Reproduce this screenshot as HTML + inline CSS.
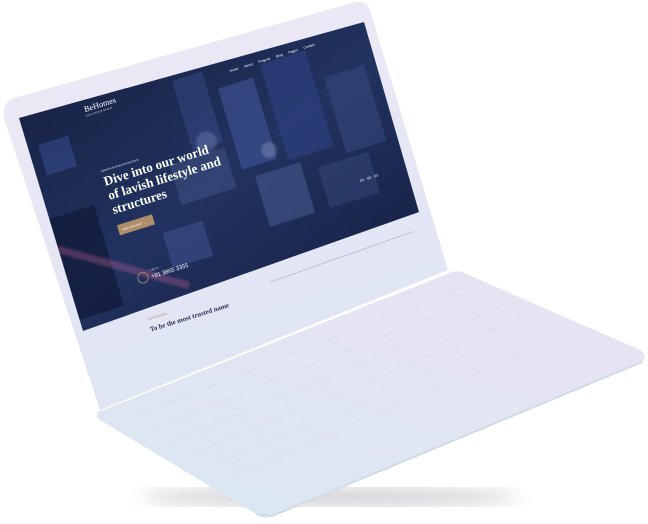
<!DOCTYPE html>
<html><head><meta charset="utf-8"><style>
html,body{margin:0;padding:0;background:#fff;width:648px;height:524px;overflow:hidden}
svg{display:block}
</style></head><body>
<svg width="648" height="524" viewBox="0 0 648 524" xmlns="http://www.w3.org/2000/svg">
<defs>
<linearGradient id="lid" x1="0" y1="0" x2="0.3" y2="1"><stop offset="0" stop-color="#efe9f6"/><stop offset="1" stop-color="#dfe5f3"/></linearGradient>
<linearGradient id="base" x1="0" y1="1" x2="0.6" y2="0"><stop offset="0" stop-color="#d8e8f1"/><stop offset="1" stop-color="#e8e3f2"/></linearGradient>
<linearGradient id="scr" x1="0" y1="0" x2="1" y2="1"><stop offset="0" stop-color="#141d3a"/><stop offset="0.5" stop-color="#223260"/><stop offset="1" stop-color="#141c3c"/></linearGradient>
<filter id="blur"><feGaussianBlur stdDeviation="8"/></filter>
<filter id="b2"><feGaussianBlur stdDeviation="2"/></filter>
<clipPath id="sc"><polygon points="19,118 364,22 419,212 83,331"/></clipPath>
<clipPath id="bc"><path d="M98,412 L452,272 L640,350 L272,516 Z"/></clipPath>
</defs>
<ellipse cx="330" cy="497" rx="190" ry="8" fill="#9a9aa6" opacity="0.5" filter="url(#blur)"/>
<!-- lid -->
<path d="M14,98 L352,3 Q366,-1 370,10 L448,270 L100,410 L4,118 Q2,102 14,98 Z" fill="url(#lid)"/>
<!-- base -->
<path d="M98,412 L452,272 Q458,270 464,273 L640,350 Q648,356 642,362 L272,516 Q262,520 256,514 L100,420 Q95,416 98,412 Z" fill="url(#base)"/>
<path d="M256,514 L272,516 L642,362" fill="none" stroke="#cfdbe8" stroke-width="2"/>
<g clip-path="url(#bc)" opacity="0.35" stroke="#cdd2ea" stroke-width="1" fill="none">
<path d="M130,418 L460,288 M150,430 L480,298 M170,442 L500,308 M190,454 L520,318 M210,466 L540,328 M230,478 L560,338"/>
<path d="M170,398 L240,470 M210,382 L280,454 M250,366 L320,438 M290,350 L360,422 M330,334 L400,406 M370,318 L440,390 M410,302 L480,374 M450,288 L520,358"/>
</g>
<!-- screen -->
<polygon points="19,118 364,22 419,212 83,331" fill="url(#scr)"/>
<g clip-path="url(#sc)">
<g transform="matrix(0.5,-0.157,0.15,0.505,19,118)">
<rect x="300" y="20" width="60" height="140" fill="#3a4f8e" opacity="0.45"/>
<rect x="380" y="60" width="70" height="160" fill="#415a9c" opacity="0.55"/>
<rect x="470" y="40" width="90" height="190" fill="#2f4686" opacity="0.55"/>
<rect x="580" y="100" width="80" height="150" fill="#3b4f88" opacity="0.45"/>
<rect x="250" y="170" width="110" height="80" fill="#4a5e92" opacity="0.4"/>
<rect x="400" y="240" width="90" height="100" fill="#5870a8" opacity="0.4"/>
<rect x="520" y="260" width="100" height="80" fill="#3a4c80" opacity="0.45"/>
<rect x="200" y="290" width="80" height="70" fill="#4b62a4" opacity="0.4"/>
<rect x="20" y="60" width="60" height="60" fill="#3b56a0" opacity="0.45"/>
<rect x="0" y="200" width="90" height="200" fill="#0e1530" opacity="0.6"/>
<path d="M0,260 L220,400" stroke="#d86b9e" stroke-width="14" opacity="0.3" filter="url(#b2)"/>
<circle cx="330" cy="150" r="20" fill="#9fb2d8" opacity="0.25" filter="url(#b2)"/>
<circle cx="440" cy="200" r="15" fill="#c2d0e8" opacity="0.25" filter="url(#b2)"/>
<text x="124" y="27" font-family="Liberation Serif,serif" font-size="16" fill="#fff">BeHomes</text>
<text x="124" y="36" font-family="Liberation Sans,sans-serif" font-size="5" fill="#ccd">REAL ESTATE GROUP</text>
<text x="411" y="37" font-family="Liberation Sans,sans-serif" font-size="6.5" fill="#fff" word-spacing="10">Home About Projects Blog Pages Contact</text>
<text x="121" y="145" font-family="Liberation Sans,sans-serif" font-size="6" fill="#dde">Award-winning development</text>
<text font-family="Liberation Serif,serif" font-size="25" font-weight="bold" fill="#fff"><tspan x="121" y="172">Dive into our world</tspan><tspan x="121" y="200">of lavish lifestyle and</tspan><tspan x="121" y="228">structures</tspan></text>
<rect x="121" y="250" width="70" height="20" fill="#b08d6a"/>
<text x="128" y="263" font-family="Liberation Sans,sans-serif" font-size="5.5" fill="#fff">VIEW PROJECT →</text>
<circle cx="140" cy="360" r="10" fill="none" stroke="#b08d6a" stroke-width="1.5"/>
<text x="156" y="352" font-family="Liberation Sans,sans-serif" font-size="6" fill="#ccd">Call us</text>
<text x="156" y="366" font-family="Liberation Sans,sans-serif" font-size="11" fill="#fff">+91 3865 3355</text>
<text x="590" y="310" font-family="Liberation Sans,sans-serif" font-size="7" fill="#fff">01 · 02 · 03</text>
</g>
</g>
<g transform="matrix(0.5,-0.157,0.15,0.505,19,118)">
<text x="125" y="440" font-family="Liberation Sans,sans-serif" font-size="6" fill="#b08d6a">OUR MISSION</text>
<text x="125" y="462" font-family="Liberation Serif,serif" font-size="13" font-weight="bold" fill="#2a3158">To be the most trusted name</text>
<line x1="370" y1="440" x2="660" y2="430" stroke="#9aa0be" stroke-width="1"/>
</g>
</svg>
</body></html>
